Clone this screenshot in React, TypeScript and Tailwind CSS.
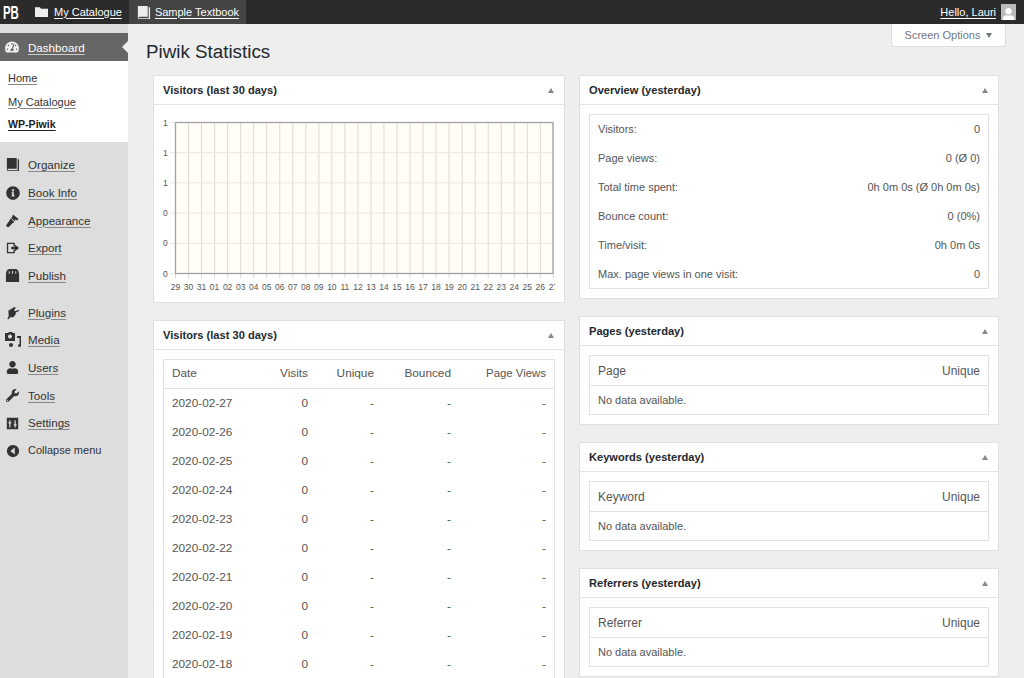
import type React from "react"
import { FaInfoCircle, FaUser, FaWrench, FaTachometerAlt } from "react-icons/fa"

const Book = ({ className }: { className?: string }) => (
  <svg viewBox="0 0 16 16" className={className} fill="currentColor">
    <path d="M2 1h10.500v11.500H4.500C3.600 12.500 3 13 3 13.500H2z" />
    <path d="M13.500 2.500H15V15H3.500C2.700 15 2 14.700 2 14h11.500z" />
  </svg>
)

const FolderIcon = () => (
  <svg viewBox="0 0 16 12" className="w-[13px] h-[10px] text-[#eee]" fill="currentColor">
    <path d="M0 0h6l1.500 2H16v10H0z" />
  </svg>
)

const HammerIcon = () => (
  <svg viewBox="0 0 16 16" className="w-[15px] h-[15px]" fill="currentColor">
    <path d="M8.500 1.500l6 5-1.500 1.500-1.500-1 -1.500 1.500-3.500-3.500 1.500-1.500z" />
    <path d="M6 5.500l4 4-2 1.500-4 4c-1.500 0.500-3-1-2.500-2.500l3-4z" />
  </svg>
)

const PlugIcon = () => (
  <svg viewBox="0 0 16 16" className="w-[15px] h-[15px]" fill="currentColor">
    <path d="M10 2l1.500 1-2 3 2 0.500 3-1.500 0.500 1.500-3.500 1.500 0 1.500-2.500 3.500-3.500 0-2 2.500-1-1 1.500-2.500-0.500-6z" />
  </svg>
)

const ExportIcon = () => (
  <svg viewBox="0 0 16 16" className="w-[14px] h-[14px]" fill="currentColor">
    <path d="M1 2h9v4H8.500V3.500h-6v9h6V10H10v4H1z" />
    <path d="M6 6.500h4V4l5 4-5 4V9.500H6z" />
  </svg>
)

const Store = () => (
  <svg viewBox="0 0 16 16" className="w-[15px] h-[15px]" fill="currentColor">
    <path d="M1 7c0-4 1.500-6 4-6h6c2.500 0 4 2 4 6v8H1zM4 6h1V3.500H4zM7.500 6h1V3H7.500zM11 6h1V3.500h-1z" fillRule="evenodd" />
  </svg>
)

const MediaIcon = () => (
  <svg viewBox="0 0 16 16" className="w-[16px] h-[16px]" fill="currentColor">
    <path d="M0 1h3l1-1h3l1 1h2v8H0zM5 2.500a2 2 0 1 0 0.010 0z" fillRule="evenodd" />
    <path d="M12 4h4v9.500a1.500 1.500 0 1 1-1.500-1.500V6H12z" />
    <circle cx="6" cy="13" r="2" />
  </svg>
)

const SettingsIcon = () => (
  <svg viewBox="0 0 16 16" className="w-[13px] h-[13px]" fill="currentColor">
    <path d="M1 1h14v14H1zM4 4v2.500H3v1.500h1v5h1.500V8h1V6.500h-1V4zM10.500 4v5H9.500v1.500h1V13H12v-2.500h1V9h-1V4z" fillRule="evenodd" />
  </svg>
)

const CollapseIcon = () => (
  <svg viewBox="0 0 16 16" className="w-[14px] h-[14px]" fill="currentColor">
    <path d="M8 1a7 7 0 1 0 0.010 0zM10 4v8L5 8z" fillRule="evenodd" />
  </svg>
)

const sideTop: [string, React.ReactNode][] = [
  ["Organize", <Book className="w-[15px] h-[15px]" />],
  ["Book Info", <FaInfoCircle className="w-[14px] h-[14px]" />],
  ["Appearance", <HammerIcon />],
  ["Export", <ExportIcon />],
  ["Publish", <Store />],
]

const sideBottom: [string, React.ReactNode][] = [
  ["Plugins", <PlugIcon />],
  ["Media", <MediaIcon />],
  ["Users", <FaUser className="w-[13px] h-[13px]" />],
  ["Tools", <FaWrench className="w-[13px] h-[13px]" />],
  ["Settings", <SettingsIcon />],
]

const dates = ["27", "26", "25", "24", "23", "22", "21", "20", "19", "18"]
const xLabels = ["29", "30", "31", "01", "02", "03", "04", "05", "06", "07", "08", "09", "10", "11", "12", "13", "14", "15", "16", "17", "18", "19", "20", "21", "22", "23", "24", "25", "26", "27"]
const yLabels = ["1", "1", "1", "0", "0", "0"]
const overview = [
  ["Visitors:", "0"],
  ["Page views:", "0 (Ø 0)"],
  ["Total time spent:", "0h 0m 0s (Ø 0h 0m 0s)"],
  ["Bounce count:", "0 (0%)"],
  ["Time/visit:", "0h 0m 0s"],
  ["Max. page views in one visit:", "0"],
]

const SideLink = ({ label, icon }: { label: string; icon: React.ReactNode }) => (
  <div className="h-[27.7px] flex items-center text-[#333] text-[11.6px]">
    <span className="w-[28px] flex justify-center pr-[3px] shrink-0">{icon}</span>
    <span className="underline decoration-[#888] underline-offset-2">{label}</span>
  </div>
)

const Panel = ({ title, children }: { title: string; children: React.ReactNode }) => (
  <section className="bg-white border border-[#e0e0e0]">
    <header className="h-[29px] flex items-center justify-between px-[9px] border-b border-[#e4e4e4]">
      <h2 className="text-[11.1px] font-bold text-[#23282d]">{title}</h2>
      <span className="w-0 h-0 border-x-[3.5px] border-x-transparent border-b-[5px] border-b-[#888] mr-[1px]" />
    </header>
    {children}
  </section>
)

const MiniTable = ({ name }: { name: string }) => (
  <div className="m-[9px] border border-[#e2e2e2] text-[#555]">
    <div className="h-[30px] flex items-center justify-between px-[8px] border-b border-[#e2e2e2]">
      <span>{name}</span>
      <span>Unique</span>
    </div>
    <div className="h-[28px] flex items-center px-[8px] text-[11px]">No data available.</div>
  </div>
)

const Chart = () => (
  <svg viewBox="0 0 410 197" className="w-[410px] h-[197px] block">
    <rect x="21.500" y="17.500" width="377.500" height="151" fill="#fffdf6" />
    {xLabels.map((_, i) => (
      <line key={i} x1={21.5 + i * 13.03} x2={21.5 + i * 13.03} y1="17.500" y2="173" stroke="#dcdad4" />
    ))}
    {yLabels.map((_, i) => (
      <line key={i} x1="16" x2="399" y1={17.5 + i * 30.2} y2={17.5 + i * 30.2} stroke="#e8e6e0" />
    ))}
    <rect x="21.500" y="17.500" width="377.500" height="151" fill="none" stroke="#a3a3a3" strokeWidth="1.300" />
    <g fill="#555" fontSize="8.500" fontFamily="Liberation Sans, sans-serif">
      {yLabels.map((v, i) => (
        <text key={i} x="9" y={20.5 + i * 30.2}>{v}</text>
      ))}
      {xLabels.map((v, i) => (
        <text key={i} x={21.5 + i * 13.03} y="184.500" textAnchor="middle">{v}</text>
      ))}
    </g>
    <rect x="401" y="172" width="9" height="16" fill="#fff" />
  </svg>
)

export default function App() {
  return (
    <div className="relative w-[1024px] h-[678px] overflow-hidden bg-[#eee] text-[12px] text-[#444] font-['Liberation_Sans',Arial,sans-serif]">
      <div className="h-[24px] bg-[#2b2b2b] text-white flex items-center text-[11px]">
        <span className="w-[27px] shrink-0 pl-[5px] text-[19px] font-bold scale-x-[0.6] origin-left leading-none">PB</span>
        <span className="ml-[8px] flex items-center h-full">
          <FolderIcon />
          <span className="ml-[6px] underline underline-offset-2">My Catalogue</span>
        </span>
        <span className="ml-[7px] w-[117px] flex items-center h-full bg-[#444] pl-[7px]">
          <Book className="w-[15px] h-[15px] text-[#eee]" />
          <span className="ml-[4px] underline underline-offset-2">Sample Textbook</span>
        </span>
        <span className="ml-auto underline underline-offset-2">Hello, Lauri</span>
        <span className="ml-[5px] mr-[8px] w-[15px] h-[16px] bg-[#bbb] flex items-end justify-center overflow-hidden">
          <FaUser className="w-[13px] h-[13px] text-white translate-y-[1px]" />
        </span>
      </div>

      <div className="flex h-[654px]">
        <aside className="w-[128px] shrink-0 bg-[#ddd] pt-[9px]">
          <div className="relative h-[28px] bg-[#666] text-white flex items-center text-[11.6px]">
            <span className="w-[28px] flex justify-center pr-[4px]">
              <FaTachometerAlt className="w-[14px] h-[14px] text-[#eee]" />
            </span>
            <span className="underline underline-offset-2 decoration-[#ccc] pt-[1px]">Dashboard</span>
            <span className="absolute right-0 top-[8px] w-0 h-0 border-y-[6px] border-y-transparent border-r-[6px] border-r-[#eee]" />
          </div>
          <div className="bg-white h-[81px] pl-[8px] pt-[5px] text-[11px] text-[#333]">
            <div className="h-[24px] flex items-center"><span className="underline underline-offset-2 decoration-[#888]">Home</span></div>
            <div className="h-[24px] flex items-center"><span className="underline underline-offset-2 decoration-[#888]">My Catalogue</span></div>
            <div className="h-[22px] flex items-center font-bold text-[10.6px] text-[#222]"><span className="underline underline-offset-2">WP-Piwik</span></div>
          </div>
          <div className="pt-[9px]">
            {sideTop.map(([label, icon]) => (
              <SideLink key={label} label={label} icon={icon} />
            ))}
          </div>
          <div className="pt-[9px]">
            {sideBottom.map(([label, icon]) => (
              <SideLink key={label} label={label} icon={icon} />
            ))}
            <div className="h-[27.7px] flex items-center text-[#333] text-[11px]">
              <span className="w-[28px] flex justify-center pr-[3px]"><CollapseIcon /></span>
              Collapse menu
            </div>
          </div>
        </aside>

        <main className="flex-1 min-w-0 pl-[18px]">
          <h1 className="h-[51px] pt-[15px] text-[18.8px] leading-[26px] text-[#23282d]">Piwik Statistics</h1>
          <div className="flex pl-[7px] gap-[14px] items-start">
            <div className="w-[412px] shrink-0 flex flex-col gap-[17px]">
              <Panel title="Visitors (last 30 days)">
                <Chart />
              </Panel>
              <Panel title="Visitors (last 30 days)">
                <div className="mx-[9px] mt-[9px] border border-[#e2e2e2] text-[#555] text-[11.8px]">
                  <div className="h-[29px] flex items-center px-[8px] border-b border-[#e2e2e2]">
                    <span className="w-[90px]">Date</span>
                    <span className="w-[46px] text-right">Visits</span>
                    <span className="w-[66px] text-right">Unique</span>
                    <span className="w-[77px] text-right">Bounced</span>
                    <span className="flex-1 text-right text-[11.4px]">Page Views</span>
                  </div>
                  {dates.map((d) => (
                    <div key={d} className="h-[29px] flex items-center px-[8px]">
                      <span className="w-[90px]">2020-02-{d}</span>
                      <span className="w-[46px] text-right">0</span>
                      <span className="w-[66px] text-right">-</span>
                      <span className="w-[77px] text-right">-</span>
                      <span className="flex-1 text-right">-</span>
                    </div>
                  ))}
                </div>
              </Panel>
            </div>

            <div className="w-[420px] shrink-0 flex flex-col gap-[17px]">
              <Panel title="Overview (yesterday)">
                <div className="m-[9px] border border-[#e2e2e2] text-[#555]">
                  {overview.map(([k, v]) => (
                    <div key={k} className="h-[28.9px] flex items-center justify-between px-[8px] text-[11px]">
                      <span>{k}</span>
                      <span>{v}</span>
                    </div>
                  ))}
                </div>
              </Panel>
              <Panel title="Pages (yesterday)"><MiniTable name="Page" /></Panel>
              <Panel title="Keywords (yesterday)"><MiniTable name="Keyword" /></Panel>
              <Panel title="Referrers (yesterday)"><MiniTable name="Referrer" /></Panel>
            </div>
          </div>
        </main>
      </div>

      <div className="absolute left-[891px] top-[24px] w-[115px] h-[23px] pt-[1px] bg-white border border-t-0 border-[#ddd] rounded-b-[3px] flex items-center justify-center gap-[6px] text-[#72777c] text-[11px]">
        Screen Options
        <span className="w-0 h-0 border-x-[3.5px] border-x-transparent border-t-[5px] border-t-[#72777c]" />
      </div>
    </div>
  )
}
